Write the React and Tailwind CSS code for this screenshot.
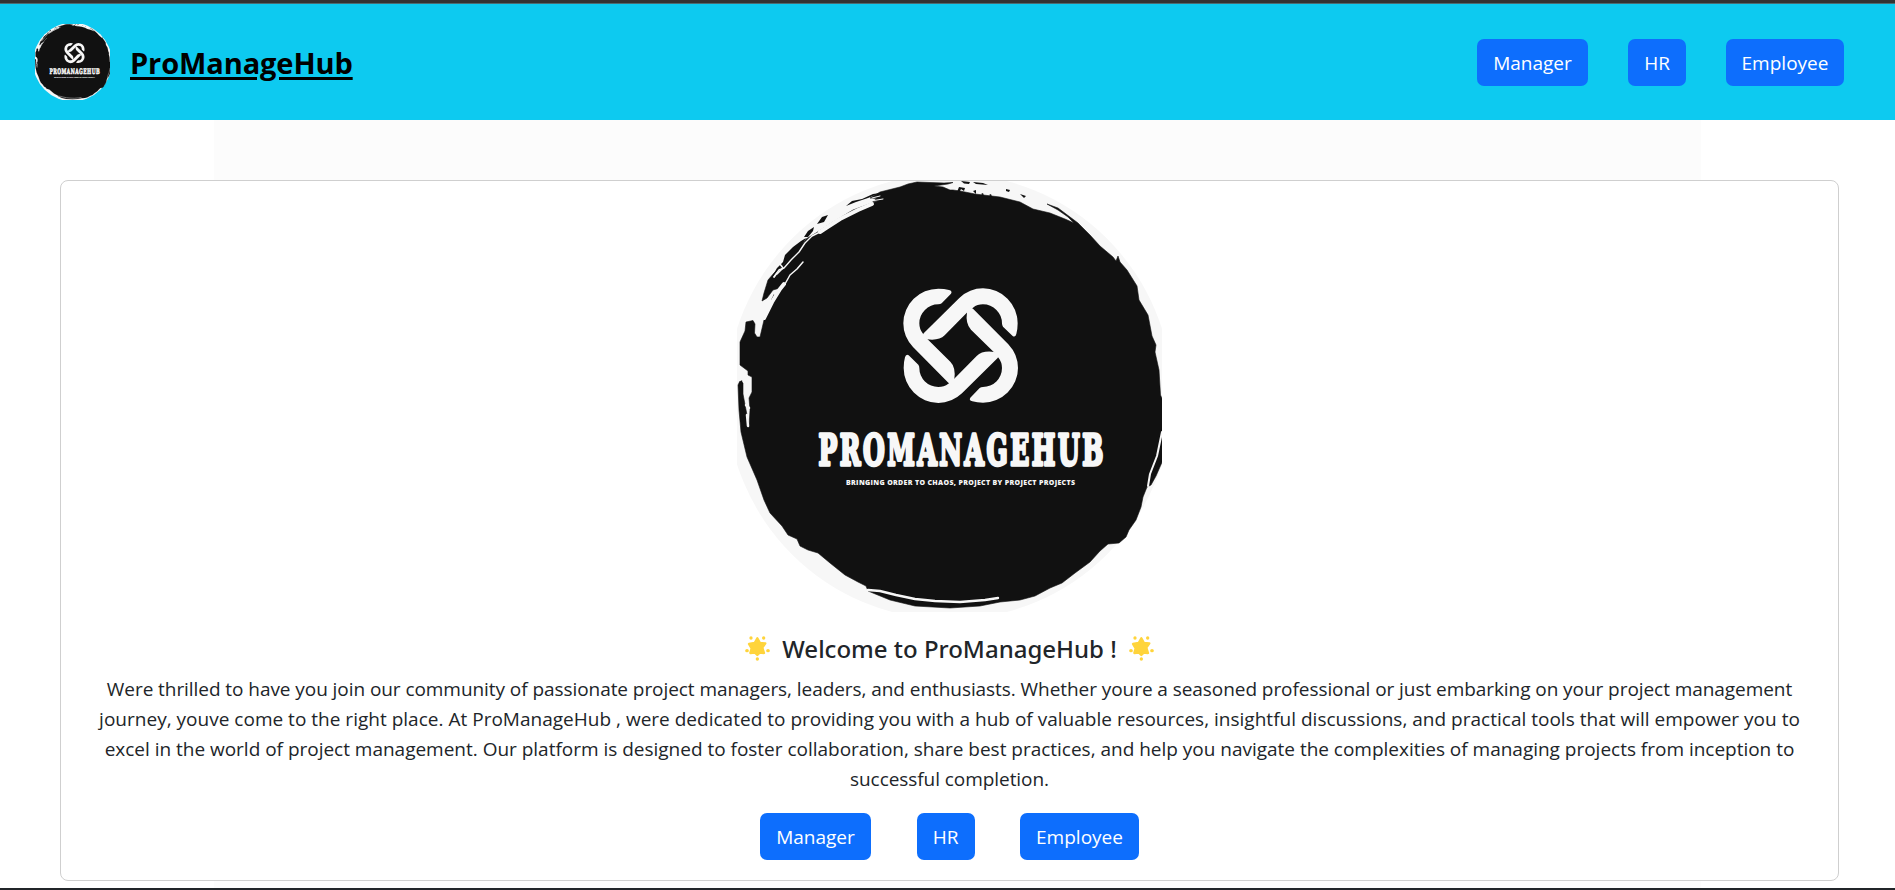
const knotArm =
  'M168 41Q173 33 162 30Q148 26 130 26A105 105 0 0 0 25 130Q25 170 54 201L160 308L168 312L178 298Q183 262 166 245L97 177L83 160Q73 147 73 130A57 57 0 0 1 130 73Q136 73 140 70Z';

const blob =
  'M900 187L908 184L917 182L930 182.5L944 183L953 182.5L948 184L934 186L943 187L950 190L953 190L960 191L975 194L1000 197L1020 202L1033 209L1050 213L1065 219L1074 223L1068 217L1058 210L1047 204L1058 208L1066 214L1078 223L1090 235L1100 246L1113 257L1116 261L1118 256L1120 262L1127 270L1137 286L1139 300L1148 315L1152 336L1156 345L1155 352L1159 370L1160.5 395L1163 401L1163 460L1156 476L1151 485L1147 487L1143 497L1141 507L1136 520L1129 530L1126 537L1119 543L1108 544L1100 551L1090 562L1075 573L1062 583L1050 588L1035 596L1020 600L1000 602L980 606L950 608L915 606L890 600L868 591L866 586L858 582L845 575L830 563L818 553L808 550L800 546L797 539L788 535L782 526L770 513L764 500L757 480L747 457L741 432L739 410L738 385L740 381L743 383L743 394L747 415L749 427L750 410L749 398L752 392L752 377L748 375L748 371L740 365L740 342L745 331L746 322L753 320.5L755 324L754.5 333L757 337L760 337L764 320L772 303L780 288L773 290L767 298L762 301L764 293L768 280L774 273L782 266L791 256L800 247L806 239L816 233L833 222L853 210L883 199L870 198L880 192Z';

function Logo({ className }) {
  return (
    <svg viewBox="737 181 425 431" preserveAspectRatio="none" className={className} role="img" aria-label="ProManageHub">
      <circle cx="949.5" cy="396.5" r="223" fill="#f7f7f7" />
      <path d={blob} fill="#111" stroke="#111" strokeWidth="0.6" strokeLinejoin="round" />
      <g fill="#111">
        <path d="M773 275L777 268L783 262L785 255L793 247L801 241L806 238L801 247L792 256L783 265Z" />
        <path d="M804 237L808 231L814 227L813 231L808 237ZM817 224L822 217L828 215L824 222ZM846 206L852 201L862 199L873 194L880 193L868 198L856 202ZM872 202L878 197L885 197L880 201Z" />
        <path d="M771 300L774 294L775 297L772 301ZM739 383L742 380L743 386L741 392Z" />
        <path d="M961 181L970 182L969 184L964 183.500ZM973 182L983 183L988 185L976 184ZM1006 189L1010 190L1009 192L1006 191ZM1020 194L1026 196L1024 198Z" />
        <path d="M957 192L959 187L965 188L964 191L961 189L959 193ZM973 191L976 190L976 194ZM981 194L983 193L984 196ZM989 195L991 194L992 197Z" />
      </g>
      <g fill="none" stroke="#f7f7f7" strokeLinecap="round" strokeLinejoin="round">
        <path d="M774 277L779 270L784 268L791 260L799 252L805 243L812 236L820 232" strokeWidth="1.400" />
        <path d="M774 277L777 273M780 264L783 268L777 274" strokeWidth="1.500" />
        <path d="M778 292L785 284L790 275L797 269L803 262" strokeWidth="1.500" />
        <path d="M764 318L772 302L780 289L784 284" strokeWidth="4" />
        <path d="M820 232L826 228L840 219L858 210L872 204" strokeWidth="4" />
        <path d="M871 201L883 199M872 198L880 196" strokeWidth="1" />
        <path d="M1162 432L1157 456L1150 474L1148 486" strokeWidth="2" />
        <path d="M868 590L880 591L896 595L915 599L935 601L960 602L985 600L998 598" strokeWidth="2.400" />
        <path d="M746 405L749 408M747 415L748 426" strokeWidth="2.500" />
      </g>
      <g transform="translate(895 280) scale(.3333)" fill="#f7f7f7">
        <path d={knotArm} />
        <path d={knotArm} transform="rotate(90 197 197)" />
        <path d={knotArm} transform="rotate(180 197 197)" />
        <path d={knotArm} transform="rotate(270 197 197)" />
      </g>
      <g transform="translate(818.500 464.500) scale(.58 1)">
        <text textLength="491" fill="#f7f7f7" stroke="#f7f7f7" strokeWidth="3.400" strokeLinejoin="round" className="font-['DejaVu_Serif',serif] text-[43px] font-bold">
          PROMANAGEHUB
        </text>
      </g>
      <text x="846" y="485.200" textLength="229" fill="#f7f7f7" className="font-['Open_Sans',sans-serif] text-[7px] font-extrabold">
        BRINGING ORDER TO CHAOS, PROJECT BY PROJECT PROJECTS
      </text>
    </svg>
  );
}

function Star() {
  return (
    <svg viewBox="0 0 75 75" className="h-[25px] w-[25px]" aria-hidden="true">
      <g fill="#ffd43b" stroke="#ffd43b" strokeLinejoin="round">
        <path d="M37 7L45 21L61 22L52 35L57 51L44 50L37 57L30 50L16 51L20 37L12 24L29 21Z" strokeWidth="7" />
        <g stroke="none">
          <circle cx="18" cy="6" r="5" />
          <circle cx="56" cy="6" r="5" />
          <ellipse cx="6" cy="44" rx="5.500" ry="5" />
          <ellipse cx="69" cy="44" rx="5.500" ry="5" />
          <ellipse cx="37" cy="69" rx="5" ry="5.500" />
        </g>
      </g>
    </svg>
  );
}

function RoleButton({ width, children }) {
  return (
    <button className={`h-[47px] rounded-[7px] bg-[#0d6efd] pt-0.5 text-center text-[19px] text-white ${width}`}>
      {children}
    </button>
  );
}

export default function App() {
  return (
    <div className="flex h-[890px] flex-col overflow-hidden border-t-[3px] border-b-2 border-t-[#333] border-b-[#212529] bg-white font-['Open_Sans','Noto_Sans',sans-serif] text-[19px] text-[#212529]">
      <header className="flex h-[117px] shrink-0 items-center justify-between border-t border-[#4b6c72] bg-[#0dcaf0] pr-[51px] pl-[35px]">
        <a className="flex items-center gap-5">
          <Logo className="h-[76px] w-[75px]" />
          <span className="text-[29px] leading-[43px] font-bold tracking-[-0.1px] text-black underline decoration-[3px] underline-offset-[3px]">
            ProManageHub
          </span>
        </a>
        <nav className="flex gap-10">
          <RoleButton width="w-[111px]">Manager</RoleButton>
          <RoleButton width="w-[58px]">HR</RoleButton>
          <RoleButton width="w-[118px]">Employee</RoleButton>
        </nav>
      </header>

      <main className="flex-1 bg-[linear-gradient(to_right,#fff_214px,#fcfcfc_214px,#fcfcfc_1701px,#fff_1701px)] pt-[60px] pr-[56px] pl-[60px]">
        <section className="flex h-[701px] flex-col items-center rounded-[8px] border border-[#cfcfcf] bg-white">
          <Logo className="h-[431px] w-[425px] shrink-0" />
          <h5 className="mt-[22px] flex h-[29px] items-center gap-3 font-['Noto_Sans',sans-serif] text-[24px] leading-[29px] font-medium">
            <Star />
            <span>Welcome to ProManageHub !</span>
            <Star />
          </h5>
          <p className="mt-[11px] text-center leading-[30px] whitespace-nowrap">
            <span className="tracking-[-0.062px]">
              Were thrilled to have you join our community of passionate project managers, leaders, and enthusiasts. Whether youre a seasoned professional or just embarking on your project management
            </span>
            <br />
            <span className="tracking-[0.012px]">
              journey, youve come to the right place. At ProManageHub , were dedicated to providing you with a hub of valuable resources, insightful discussions, and practical tools that will empower you to
            </span>
            <br />
            <span className="tracking-[-0.014px]">
              excel in the world of project management. Our platform is designed to foster collaboration, share best practices, and help you navigate the complexities of managing projects from inception to
            </span>
            <br />
            <span className="tracking-[-0.062px]">successful completion.</span>
          </p>
          <div className="mt-[19px] flex gap-[45.5px]">
            <RoleButton width="w-[111px]">Manager</RoleButton>
            <RoleButton width="w-[58px]">HR</RoleButton>
            <RoleButton width="w-[119px]">Employee</RoleButton>
          </div>
        </section>
      </main>
    </div>
  );
}
